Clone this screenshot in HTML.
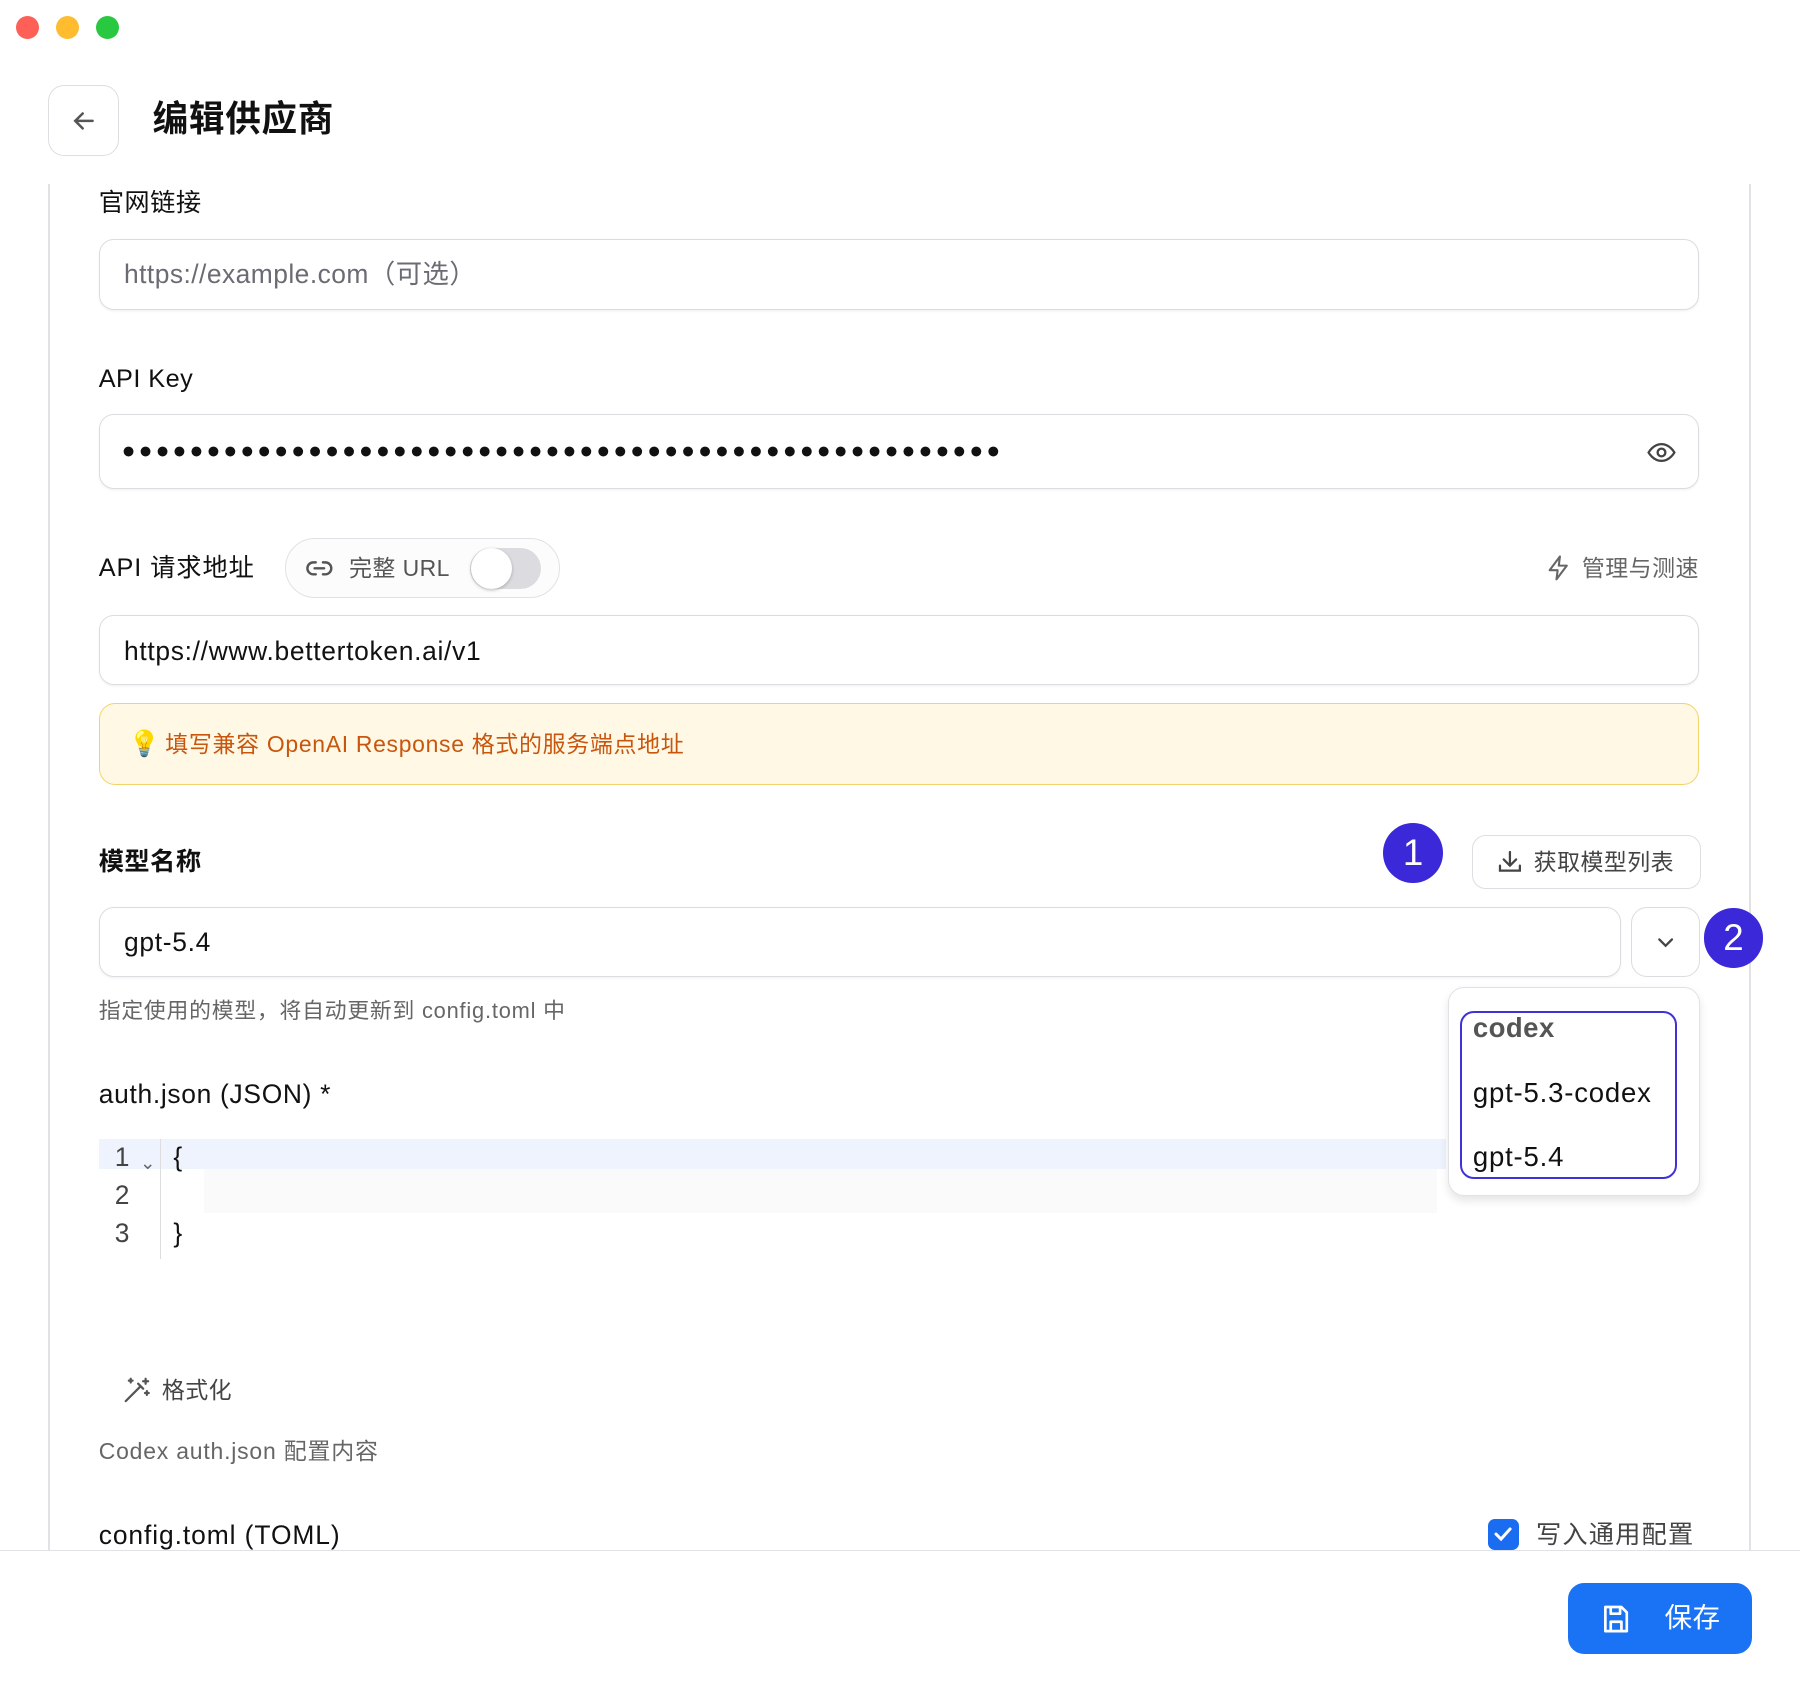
<!DOCTYPE html>
<html><head><meta charset="utf-8"><style>
html,body{margin:0;padding:0;background:#fff;overflow:hidden}
body{width:1568px;height:1469px;zoom:1.147959;position:relative;font-family:"Liberation Sans","Noto Sans CJK SC",sans-serif;color:#111}
.a{position:absolute}
.dot{position:absolute;width:20px;height:20px;border-radius:50%;top:14px}
.inp{position:absolute;left:86px;width:1394px;border:1.5px solid #dcdce0;border-radius:13px;box-shadow:0 1px 2px rgba(0,0,0,.05);box-sizing:border-box}
.lbl{position:absolute;left:86px;font-size:22px;line-height:30px;letter-spacing:0.4px}
.t{position:absolute;font-size:22px;line-height:30px;white-space:nowrap;letter-spacing:0.4px}
.circ{position:absolute;width:52px;height:52px;border-radius:50%;background:#3b28d9;color:#fff;font-size:32px;line-height:52px;text-align:center}
</style></head><body>
<div class="dot" style="left:14px;background:#fe5f57"></div>
<div class="dot" style="left:49px;background:#febc2e"></div>
<div class="dot" style="left:84px;background:#28c840"></div>

<div class="a" style="left:42px;top:74px;width:60px;height:60px;border:1.5px solid #dedee2;border-radius:14px"></div>
<svg class="a" style="left:60px;top:92px" width="26" height="26" viewBox="0 0 24 24" fill="none" stroke="#555" stroke-width="2" stroke-linecap="round"><path d="M19 12H5M11 6l-6 6 6 6"/></svg>
<div class="t" style="left:133px;top:86px;font-size:31px;line-height:36px;font-weight:bold;letter-spacing:0.6px">编辑供应商</div>

<div class="a" style="left:42px;top:160px;width:1.5px;height:1190px;background:#e2e2e6"></div>
<div class="a" style="left:1524px;top:160px;width:1.5px;height:1190px;background:#e2e2e6"></div>

<div class="lbl" style="top:162px">官网链接</div>
<div class="inp" style="top:208px;height:62px"></div>
<div class="t" style="left:108px;top:224px;color:#6b6b73;font-size:23px">https://example.com（可选）</div>

<div class="lbl" style="top:315px">API Key</div>
<div class="inp" style="top:361px;height:65px"></div>
<div class="t" style="left:106px;top:377px;font-size:20px;letter-spacing:2.7px;font-weight:bold">●●●●●●●●●●●●●●●●●●●●●●●●●●●●●●●●●●●●●●●●●●●●●●●●●●●●</div>
<svg class="a" style="left:1434px;top:381px" width="27" height="27" viewBox="0 0 24 24" fill="none" stroke="#444" stroke-width="1.8"><path d="M2 12s3.5-6.5 10-6.5S22 12 22 12s-3.5 6.5-10 6.5S2 12 2 12z"/><circle cx="12" cy="12" r="3"/></svg>

<div class="lbl" style="top:480px;letter-spacing:0.8px">API 请求地址</div>
<div class="a" style="left:248px;top:469px;width:238px;height:50px;border:1.5px solid #e2e2e6;border-radius:26px;background:#fcfcfd"></div>
<svg class="a" style="left:266px;top:483px" width="25" height="25" viewBox="0 0 24 24" fill="none" stroke="#555" stroke-width="2" stroke-linecap="round"><path d="M9 17H7a5 5 0 010-10h2M15 7h2a5 5 0 010 10h-2M8 12h8"/></svg>
<div class="t" style="left:304px;top:480px;font-size:20px;color:#555">完整 URL</div>
<div class="a" style="left:409px;top:477px;width:62px;height:36px;border-radius:18px;background:#dcdce0"></div>
<div class="a" style="left:410px;top:477px;width:36px;height:36px;border-radius:50%;background:#fff;box-shadow:0 1px 3px rgba(0,0,0,.25)"></div>
<svg class="a" style="left:1346px;top:482px" width="24" height="26" viewBox="0 0 24 24" fill="none" stroke="#666" stroke-width="1.8" stroke-linejoin="round"><path d="M13 2L4 14h7l-1 8 9-12h-7l1-8z"/></svg>
<div class="t" style="left:1378px;top:480px;font-size:20px;color:#666">管理与测速</div>

<div class="inp" style="top:536px;height:61px"></div>
<div class="t" style="left:108px;top:552px;font-size:23px;letter-spacing:0.6px">https://www.bettertoken.ai/v1</div>

<div class="a" style="left:86px;top:612px;width:1394px;height:72px;border:1.5px solid #f3d36b;border-radius:14px;background:#fef8e5;box-sizing:border-box"></div>
<div class="t" style="left:112px;top:633px;font-size:22px">💡</div>
<div class="t" style="left:144px;top:633px;font-size:20px;color:#c9560d;letter-spacing:0.6px">填写兼容 OpenAI Response 格式的服务端点地址</div>

<div class="lbl" style="top:736px;font-weight:bold">模型名称</div>
<div class="circ" style="left:1205px;top:717px">1</div>
<div class="a" style="left:1282px;top:727px;width:198px;height:46px;border:1.5px solid #dedee2;border-radius:12px"></div>
<svg class="a" style="left:1302px;top:738px" width="26" height="26" viewBox="0 0 24 24" fill="none" stroke="#444" stroke-width="1.8" stroke-linecap="round"><path d="M4 15v4h16v-4M12 4v11M7 10l5 5 5-5"/></svg>
<div class="t" style="left:1336px;top:736px;font-size:20px;color:#444">获取模型列表</div>

<div class="inp" style="top:790px;height:61px;width:1326px"></div>
<div class="t" style="left:108px;top:806px;font-size:23px;letter-spacing:0.6px">gpt-5.4</div>
<div class="a" style="left:1421px;top:790px;width:60px;height:61px;border:1.5px solid #dcdce0;border-radius:14px;box-sizing:border-box"></div>
<svg class="a" style="left:1440px;top:810px" width="22" height="22" viewBox="0 0 24 24" fill="none" stroke="#444" stroke-width="2.2" stroke-linecap="round"><path d="M6 9l6 6 6-6"/></svg>
<div class="circ" style="left:1484px;top:791px">2</div>

<div class="t" style="left:86px;top:866px;font-size:19px;color:#666;letter-spacing:0.7px">指定使用的模型，将自动更新到 config.toml 中</div>

<div class="t" style="left:86px;top:938px;font-size:23px;letter-spacing:0.6px">auth.json (JSON) *</div>
<div class="a" style="left:86px;top:992px;width:1174px;height:26px;background:#eef3fd"></div>
<div class="a" style="left:178px;top:1018px;width:1074px;height:39px;background:#fafafa"></div>
<div class="a" style="left:139px;top:992px;width:1px;height:105px;background:#ddd"></div>
<div class="t" style="left:100px;top:993px;font-size:23px;color:#444">1</div>
<div class="t" style="left:122px;top:998px;font-size:16px;color:#666">⌄</div>
<div class="t" style="left:100px;top:1026px;font-size:23px;color:#444">2</div>
<div class="t" style="left:100px;top:1059px;font-size:23px;color:#444">3</div>
<div class="t" style="left:151px;top:993px;font-size:23px">{</div>
<div class="t" style="left:151px;top:1059px;font-size:23px">}</div>

<div class="a" style="left:1261px;top:860px;width:220px;height:182px;border:1.5px solid #e2e2e6;border-radius:14px;background:#fff;box-shadow:0 4px 8px rgba(0,0,0,.1);box-sizing:border-box"></div>
<div class="a" style="left:1272px;top:881px;width:189px;height:146px;border:2px solid #4032d6;border-radius:12px;box-sizing:border-box"></div>
<div class="t" style="left:1283px;top:881px;font-size:24px;color:#555;font-weight:bold">codex</div>
<div class="t" style="left:1283px;top:937px;font-size:24px;letter-spacing:0.7px">gpt-5.3-codex</div>
<div class="t" style="left:1283px;top:993px;font-size:24px;letter-spacing:0.7px">gpt-5.4</div>

<svg class="a" style="left:106px;top:1198px" width="26" height="26" viewBox="0 0 24 24" fill="none" stroke="#555" stroke-width="1.8" stroke-linecap="round"><path d="M3 21L15 9M13 7l4 4M19 3v4M17 5h4M7 3v3M5.5 4.5h3M20 13v3M18.5 14.5h3"/></svg>
<div class="t" style="left:141px;top:1196px;font-size:20px;color:#444">格式化</div>
<div class="t" style="left:86px;top:1249px;font-size:20px;color:#666;letter-spacing:0.7px">Codex auth.json 配置内容</div>

<div class="t" style="left:86px;top:1322px;font-size:23px;letter-spacing:0.8px">config.toml (TOML)</div>
<div class="a" style="left:1296px;top:1323px;width:27px;height:27px;border-radius:6px;background:#1a6cf0"></div>
<svg class="a" style="left:1299px;top:1326px" width="21" height="21" viewBox="0 0 24 24" fill="none" stroke="#fff" stroke-width="3" stroke-linecap="round"><path d="M5 12l5 5 9-10"/></svg>
<div class="t" style="left:1338px;top:1322px;font-size:22px;color:#444;letter-spacing:1px">写入通用配置</div>

<div class="a" style="left:0;top:1350px;width:1568px;height:119px;background:#fff;border-top:1.5px solid #e2e2e6"></div>
<div class="a" style="left:1366px;top:1379px;width:160px;height:62px;border-radius:14px;background:#1a73f5"></div>
<svg class="a" style="left:1394px;top:1396px" width="28" height="28" viewBox="0 0 24 24" fill="none" stroke="#fff" stroke-width="2" stroke-linejoin="round"><path d="M5 3h11l4 4v14H4V3zM8 3v5h7V3M8 21v-7h8v7"/></svg>
<div class="t" style="left:1450px;top:1395px;font-size:24px;color:#fff">保存</div>
</body></html>
